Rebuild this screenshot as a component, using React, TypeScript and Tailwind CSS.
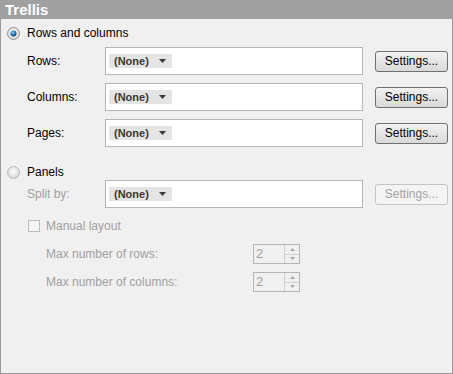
import React from "react";

const font = { fontFamily: '"Liberation Sans", Arial, sans-serif' };

function Radio({ checked, disabled }: { checked?: boolean; disabled?: boolean }) {
  return (
    <svg width="13" height="13" viewBox="0 0 13 13" className="shrink-0">
      <defs>
        <radialGradient id="rg" cx="0.5" cy="0.4" r="0.6">
          <stop offset="0" stopColor="#ffffff" />
          <stop offset="1" stopColor="#d4d4d4" />
        </radialGradient>
        <radialGradient id="dot" cx="0.4" cy="0.35" r="0.7">
          <stop offset="0" stopColor="#8ad4f7" />
          <stop offset="0.6" stopColor="#1f6fb4" />
          <stop offset="1" stopColor="#0c3f73" />
        </radialGradient>
      </defs>
      <circle cx="6.5" cy="6.5" r="6" fill="url(#rg)" stroke={disabled ? "#b8b8b8" : "#8e8f8f"} />
      {checked && <circle cx="6.5" cy="6.5" r="3" fill="url(#dot)" />}
    </svg>
  );
}

function Chip() {
  return (
    <div className="flex h-[14px] w-[63px] items-center bg-[#e4e4e4] pl-[5px] text-[11px] font-bold text-[#40372d]">
      <span>(None)</span>
      <svg width="8" height="4" viewBox="0 0 8 4" className="ml-[10px]">
        <path d="M0 0h7L3.5 4z" fill="#3c3c3c" />
      </svg>
    </div>
  );
}

function Field({ label, disabled }: { label: string; disabled?: boolean }) {
  return (
    <div className="flex items-center">
      <div className={`w-[78px] text-[12px] ${disabled ? "text-[#a0a0a0]" : "text-[#000]"}`}>{label}</div>
      <div className="flex h-[28px] w-[258px] items-center border border-[#b5b5b5] bg-white pl-[3px]">
        <Chip />
      </div>
      <button
        className={`ml-[12px] h-[21px] w-[73px] rounded-[3px] border text-[12px] ${
          disabled
            ? "border-[#c4c4c4] bg-[#f4f4f4] text-[#a3a3a3]"
            : "border-[#707070] bg-gradient-to-b from-[#f2f2f2] to-[#d9d9d9] text-[#000]"
        }`}
        style={font}
      >
        Settings...
      </button>
    </div>
  );
}

function Spin({ label }: { label: string }) {
  return (
    <div className="flex items-center">
      <div className="w-[207px] text-[12px] text-[#a0a0a0]">{label}</div>
      <div className="flex h-[20px] w-[47px] items-stretch border border-[#b5b5b5] bg-[#f0f0f0]">
        <div className="flex-1 pl-[2px] text-[13px] leading-[18px] text-[#a0a0a0]">2</div>
        <div className="flex w-[15px] flex-col border-l border-[#cfcfcf]">
          <div className="flex flex-1 items-center justify-center border-b border-[#cfcfcf]">
            <svg width="5" height="3" viewBox="0 0 5 3">
              <path d="M0 3h5L2.5 0z" fill="#a8a8a8" />
            </svg>
          </div>
          <div className="flex flex-1 items-center justify-center">
            <svg width="5" height="3" viewBox="0 0 5 3">
              <path d="M0 0h5L2.5 3z" fill="#a8a8a8" />
            </svg>
          </div>
        </div>
      </div>
    </div>
  );
}

export default function App() {
  return (
    <div className="h-[374px] w-[453px] border border-[#999] bg-[#f0f0f0]" style={font}>
      <div className="-mx-px -mt-px h-[19px] bg-[#a0a0a0] pl-[5px] text-[15px] font-bold leading-[19px] text-white">
        Trellis
      </div>
      <div className="pl-[6px] pt-[5px]">
        <div className="flex items-center gap-[7px] text-[12px]">
          <Radio checked />
          <span>Rows and columns</span>
        </div>
        <div className="mt-[5px] flex flex-col gap-[8px] pl-[20px]">
          <Field label="Rows:" />
          <Field label="Columns:" />
          <Field label="Pages:" />
        </div>
        <div className="mt-[16px] flex items-center gap-[7px] text-[12px]">
          <Radio disabled />
          <span>Panels</span>
        </div>
        <div className="-mt-px pl-[20px]">
          <Field label="Split by:" disabled />
        </div>
        <div className="mt-[9px] flex items-center gap-[6px] pl-[21px] text-[12px] text-[#a0a0a0]">
          <div className="h-[12px] w-[12px] border border-[#bcbcbc] bg-[#f4f4f4]" />
          <span>Manual layout</span>
        </div>
        <div className="mt-[9px] flex flex-col gap-[8px] pl-[39px]">
          <Spin label="Max number of rows:" />
          <Spin label="Max number of columns:" />
        </div>
      </div>
    </div>
  );
}
